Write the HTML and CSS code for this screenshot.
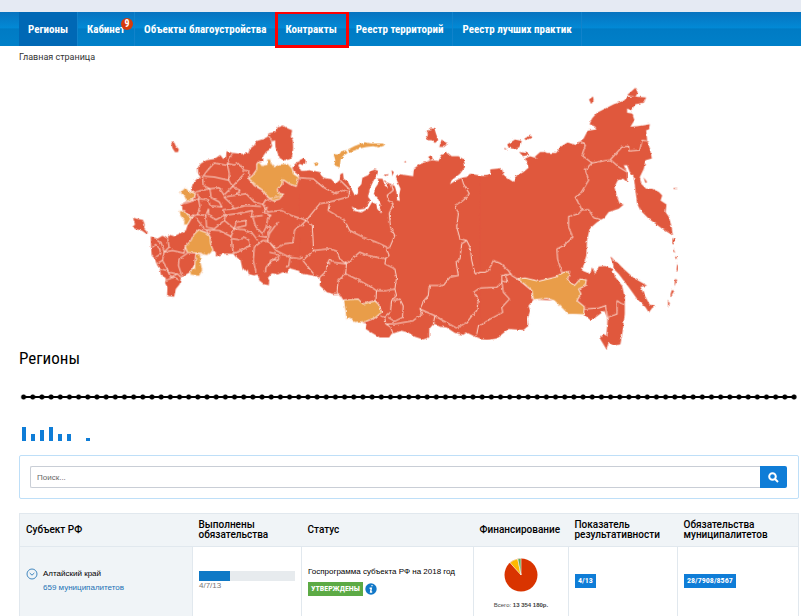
FILE: index.html
```html
<!DOCTYPE html>
<html lang="ru">
<head>
<meta charset="utf-8">
<meta name="viewport" content="width=device-width, initial-scale=1">
<title>Регионы</title>
<link rel="stylesheet" href="styles.css">
</head>
<body>
<nav class="nav">
  <a class="nav-link current" href="#">Регионы</a>
  <a class="nav-link" href="#">Кабинет<span class="count">9</span></a>
  <a class="nav-link" href="#">Объекты благоустройства</a>
  <a class="nav-link marked" href="#">Контракты</a>
  <a class="nav-link" href="#">Реестр территорий</a>
  <a class="nav-link" href="#">Реестр лучших практик</a>
</nav>
<main class="page">
  <a class="crumb" href="#">Главная страница</a>
  <svg class="map" viewBox="27 0 1680 797" role="img" aria-label="Карта регионов">
    <defs>
      <filter id="coast" x="0" y="0" width="1" height="1"><feTurbulence type="fractalNoise" baseFrequency="0.1" numOctaves="1" seed="4"/><feDisplacementMap in="SourceGraphic" scale="9" xChannelSelector="R" yChannelSelector="G"/></filter>
    </defs>
    <g filter="url(#coast)">
      <!-- western part -->
      <g>
        <path class="red" d="M602 276L585 272 567 275 545 272 540 262 536 256 542 250 556 252 558 240 552 234 545 243 532 246 524 254 518 264 524 274 535 283 540 290 510 280 460 270 420 265 412 250 432 243 431 228 440 215 452 207 458 197 455 185 467 180 468 200 475 220 482 235 495 240 510 238 518 230 521 205 520 180 514 170 518 150 505 145 490 136 475 141 468 155 447 160 445 170 430 177 412 182 405 195 390 207 388 218 370 221 342 218 322 213 320 232 312 236 303 224 285 236 262 240 245 250 236 262 237 280 245 292 235 294 222 308 215 328 229 340 224 358 200 364 188 370 190 390 205 400 217 412 205 435 200 450 180 460 165 467 148 462 146 475 130 466 115 475 95 468 96 500 98 525 108 535 112 550 122 565 126 585 140 592 138 608 145 620 144 646 165 648 170 625 182 610 186 590 212 575 230 545 245 520 262 525 282 512 290 515 290 528 312 520 342 520 350 530 363 536 370 568 385 568 388 580 402 585 415 582 420 600 435 612 448 614 450 600 445 592 458 578 475 582 490 575 505 578 508 562 545 573 580 583 602 586Z"/>
        <path class="red" d="M156 188L165 186 170 197 179 207 177 215 168 216 160 204ZM42 412L58 416 72 419 77 432 75 445 87 458 82 460 68 450 50 446 40 440 48 432Z"/>
        <path class="gold line" d="M388 295L400 285 412 268 412 252 418 244 428 256 443 252 443 238 452 236 457 250 465 260 480 251 505 250 518 264 522 280 538 291 530 318 512 312 488 296 488 312 474 326 475 338 492 342 480 356 462 362 445 350 430 330 405 316Z"/>
        <path class="gold line" d="M182 336L200 320 206 330 229 340 224 356 202 363 196 350ZM180 390L196 391 208 405 217 412 205 432 194 434 195 420 183 406ZM238 448L260 456 272 468 274 490 282 510 262 525 245 518 205 516 198 498 215 480 224 462ZM230 518L243 520 245 545 250 570 240 587 214 583 212 573 226 562Z"/>
        <path class="gold" d="M583 250L592 247 597 253 588 256Z"/>
        <path class="border" d="M445 160L458 185 465 182M340 218L328 240 325 256 285 248 265 270 250 290 252 315 272 325M322 250L345 254 360 250 374 270 388 272 388 295M325 256L330 280 328 300 285 290 255 288M328 300L340 318 375 280M272 325L300 322 314 344 340 318 362 330 350 345 314 350M229 335L272 325 276 352 300 365 308 380 272 376 268 358 240 356 235 340M314 350L330 365 345 385 310 388M350 345L380 340 405 365 430 372 440 357 455 362M345 385L380 375 425 378M430 372L445 395 485 390 515 405 555 418 600 370M310 388L315 405 290 418 268 405 268 385M238 356L242 378 235 402 217 410M235 402L260 405 268 385M188 372L212 365 238 356M217 412L225 402M260 405L262 440 285 445 315 420 320 400M315 405L350 400 380 395 400 390 395 410 430 405M315 420L345 445 350 425 380 420 380 435 350 442M400 410L410 440 430 460 440 440 455 440 440 470 415 465M230 412L255 445 265 450M262 448L275 475M265 448L300 450 335 468 345 445 375 448 400 460 415 480M338 475L360 478 375 470 390 480 392 495 365 510 343 518M335 468L340 505 343 520M440 440L445 415 455 405 430 395 445 380M475 425L450 460 445 480 470 505 495 490 520 487 525 450 555 420M430 480L405 500 402 540 410 575M430 480L445 480 470 510 490 520 510 530 545 535 582 510 602 508M450 515L470 520 480 530 475 540 455 535 452 545 440 560 438 575M482 520L440 560M512 528L508 555 500 560M550 530L560 555 580 583M555 418L580 435 583 505M388 295L430 330 450 355 492 345M540 290L580 297 602 310M146 475L150 500 135 515 128 490 115 480M198 498L195 518 160 510 135 515 130 540 150 575 175 580 186 590M205 518L180 535 178 555 188 585M100 500L110 492 122 505 125 520 110 530M112 550L130 540M122 565L145 570 155 590 175 580M138 600L165 590 180 598M245 518L230 520"/>
      </g>
      <!-- central part -->
      <g transform="translate(540)">
        <path class="red" d="M0 274L30 270 60 280 72 292 95 297 108 310 120 300 122 282 130 278 132 295 145 305 155 325 165 345 175 340 175 322 185 312 188 292 205 285 215 272 225 268 235 272 232 285 222 300 210 325 205 350 212 358 205 372 195 385 175 388 155 378 165 392 185 396 205 385 217 365 230 372 232 385 245 400 240 385 242 370 232 350 222 345 225 325 235 310 235 295 248 295 255 315 265 325 258 305 275 312 285 318 290 335 292 360 300 362 298 345 302 325 295 310 288 290 300 282 320 285 340 288 342 265 360 252 385 242 400 240 415 243 425 225 440 215 455 228 475 228 492 238 495 260 480 280 455 300 450 312 465 302 485 292 500 290 510 280 535 285 560 290 575 280 570 268 602 264 602 765 590 773 560 776 530 770 500 755 490 762 465 757 440 740 420 738 402 728 388 745 388 770 370 776 345 768 325 755 305 750 275 760 268 770 240 770 215 755 198 745 200 728 165 720 145 712 132 660 120 640 100 640 82 635 60 615 62 592 42 585 20 582 0 578Z"/>
        <path class="red" d="M380 150L395 150 390 142 403 143 407 157 415 180 405 188 395 180 384 180 378 168 385 162ZM418 200L425 178 433 185 445 190 432 200ZM0 240L12 234 18 243 10 255 0 250ZM312 246L318 242 319 247ZM385 230L395 223 398 236 390 240ZM428 218L440 212 440 220ZM250 283L268 282 260 288ZM275 270L282 275 278 288ZM250 300L258 302 262 310Z"/>
        <path class="gold" d="M145 208L165 197 195 186 215 190 250 190 254 196 238 202 220 198 200 200 180 205 148 217ZM102 222L118 223 125 214 138 210 144 218 130 227 123 238 120 262 104 255 107 240ZM43 252L52 247 57 253 48 257Z"/>
        <path class="gold line" d="M132 658L175 655 190 670 225 660 240 675 245 695 225 712 198 722 165 725 150 712 140 716Z"/>
        <path class="border" d="M0 292L40 295 70 320 108 340 130 330 150 335 145 350 90 365 60 370 20 420 0 412M20 420L0 440M20 420L38 435 42 510 20 530 10 540 42 580M42 510L90 505 112 512 120 535 140 550 100 545 90 535 82 550 92 545M10 530L0 535M85 545L80 572 60 590M90 365L85 390 110 405 135 420 150 450 190 470 230 485 262 500M150 328L122 300M140 550L180 515 205 525 230 530 258 535 255 550 285 565 290 590 285 625 260 630 230 630 215 620 170 595 138 580 140 550M138 580L115 600 112 635 130 658M230 630L228 665M285 625L290 645 275 660 272 695 255 710 242 705M280 660L300 655 310 675 308 710 285 722 265 710M255 712L258 730 272 738 280 760M275 312L280 330 262 345 265 360 280 370 268 400 272 440 285 465 270 500 260 505 268 525 255 535M485 292L490 310 508 340 490 360 465 375 475 400 470 440 480 475 500 480 485 490 480 535 468 545 475 585 450 590 430 615 388 615 385 645 372 660 360 685 405 705 430 720 470 742 500 725 520 700 530 690 535 655 520 635 535 625 580 618 602 600M360 685L368 698 340 720 310 725 285 730 260 730M405 705L400 728M500 480L510 500 515 540 525 580 545 575 560 580 575 545 602 542M602 705L570 725 560 735 535 735 530 760"/>
      </g>
      <!-- eastern part -->
      <g transform="translate(1080)">
        <path class="red" d="M0 290L30 285 32 268 50 270 65 265 72 285 85 295 100 305 105 290 130 275 145 262 135 235 150 228 170 235 190 215 200 218 228 218 240 200 262 187 290 195 300 182 310 175 322 152 348 148 345 140 328 132 335 115 350 98 375 85 400 72 430 62 442 50 470 50 497 52 490 68 465 72 452 90 440 85 440 98 455 100 462 120 450 140 470 138 508 132 505 148 497 150 500 180 508 205 514 235 495 240 490 265 478 290 482 310 497 325 515 325 535 335 545 345 540 360 558 372 555 395 565 410 572 435 577 465 545 445 505 415 480 390 470 370 465 330 460 290 448 275 440 255 430 255 440 275 440 305 428 295 412 300 402 320 410 350 418 370 430 372 415 385 385 395 372 412 350 425 328 445 320 480 318 525 305 570 330 580 335 560 345 580 355 558 375 556 395 565 405 590 425 615 433 650 433 700 427 750 420 790 400 795 385 785 378 805 360 775 370 760 378 765 382 715 372 690 345 710 330 718 312 702 250 660 160 657 145 675 150 690 142 715 145 735 130 748 85 745 60 765 30 775 0 776Z"/>
        <path class="red" d="M390 528L396 532 398 540 410 545 430 565 460 592 500 615 480 618 490 640 508 672 525 675 515 682 505 695 495 680 470 655 445 620 415 580 400 565 398 550ZM440 45L455 32 465 23 472 38 465 50 450 48ZM326 58L338 49 340 60 333 72ZM82 192L105 178 125 182 118 200 105 206 85 202ZM132 175L152 166 156 171 138 180ZM117 215L142 218 145 224 128 228ZM163 230L180 215 198 216 180 236ZM73 202L80 207 74 208Z"/>
        <path class="red" d="M576 472L582 478 580 492 575 490ZM580 502L583 518 578 512ZM583 527L590 530 586 537ZM590 550L594 556 592 574 588 568ZM583 595L590 597 582 617ZM574 628L581 630 570 650 570 640ZM562 660L568 668 563 679ZM579 323L590 323 590 326 579 326ZM489 291L500 305 495 308Z"/>
        <path class="gold line" d="M112 595L135 592 175 602 225 590 250 575 268 573 262 598 282 615 300 595 318 598 315 615 295 625 302 640 290 660 312 678 310 702 262 700 245 682 222 660 200 653 160 657 155 630 135 612Z"/>
        <path class="border" d="M300 182L315 195 305 225 335 248 390 238 425 200 445 198 445 212 478 210 485 180 500 182M335 248L315 268 325 300 300 340 285 350 305 388 295 400 265 408 265 440 278 470 250 495 230 505 232 535 245 575M305 388L325 388 340 412 362 418M390 238L415 260 440 275M0 575L15 575 25 570 40 540 60 548 85 570 95 585 112 595M95 580L65 585 65 600 82 605 75 580M65 605L50 620 0 622M65 600L70 635 88 655 65 680 68 695 30 715 0 735M112 595L155 630 155 655M312 685L355 682 375 675 382 710 410 700 410 660 422 668 435 672M380 710L380 735"/>
      </g>
    </g>
  </svg>
  <h1 class="title">Регионы</h1>
  <div class="beads"></div>
  <svg class="bars" width="72" height="14" viewBox="0 0 72 14" aria-hidden="true"><path d="M3 0h4v14H3zM12 7h4v7h-4zM21 3h4v11h-4zM30 0h4v14h-4zM39 7h4v7h-4zM48 7h4v7h-4zM67 11h4v3h-4z"/></svg>
  <form class="search">
    <input class="query" type="text" placeholder="Поиск..." aria-label="Поиск">
    <button class="go" type="button" aria-label="Найти"><svg width="11" height="11" viewBox="0 0 11 11"><circle cx="4.5" cy="4.5" r="3.3"/><path d="M7 7l3 3"/></svg></button>
  </form>
  <table class="regions">
    <colgroup><col class="c1"><col class="c2"><col class="c3"><col class="c4"><col class="c5"><col class="c6"></colgroup>
    <thead><tr><th>Субъект РФ</th><th>Выполнены обязательства</th><th>Статус</th><th>Финансирование</th><th>Показатель результативности</th><th>Обязательства муниципалитетов</th></tr></thead>
    <tbody><tr>
      <td class="subject"><div class="subject-row">
        <svg width="12" height="12" viewBox="0 0 12 12" aria-hidden="true"><circle cx="6" cy="6" r="5"/><path d="M3.7 5L6 7.2 8.3 5"/></svg>
        <div class="names"><span>Алтайский край</span><a href="#">659 муниципалитетов</a></div>
      </div></td>
      <td><div class="track"><div class="fill"></div></div><div class="ratio">4/7/13</div></td>
      <td><div class="program">Госпрограмма субъекта РФ на 2018 год</div><div class="status"><span class="tag green">УТВЕРЖДЕНЫ</span><svg width="12" height="12" viewBox="0 0 12 12" aria-hidden="true"><circle cx="6" cy="6" r="5.7" fill="#1278c8"/><path d="M6.4 2.6h1.2M4.6 5.2h1.7L5.6 9h1.6" fill="none" stroke="#fff" stroke-width="1.4"/></svg></div></td>
      <td class="finance"><svg width="34" height="34" viewBox="0 0 34 34" aria-hidden="true"><circle cx="17" cy="17" r="16.5" fill="#d93400"/><path d="M17 17L6 4.7A16.5 16.5 0 0 1 13.8.8Z" fill="#ffb800" stroke="#fff" stroke-width=".6"/><path d="M17 17L13.8.8A16.5 16.5 0 0 1 17 .5Z" fill="#5eaa54" stroke="#fff" stroke-width=".6"/></svg><div class="total">Всего: <b>13 354 180р.</b></div></td>
      <td><span class="tag">4/13</span></td>
      <td><span class="tag">28/7908/8567</span></td>
    </tr></tbody>
  </table>
</main>
</body>
</html>
```

FILE: styles.css
```css
* { box-sizing: border-box; }
body { margin: 0; border-top: 12px solid #e5eaf3; background: #fff; color: #000; font-family: "Liberation Sans", Arial, sans-serif; font-size: 8px; }
a { text-decoration: none; }
.nav { display: flex; height: 34px; padding-left: 19px; background: linear-gradient(#0873bf, #0289d5 46%, #007bc4 50%, #0080c9); }
.nav-link { position: relative; display: flex; align-items: center; padding: 0 9px; border-right: 1px solid #1183cb; color: #fff; font: bold 11px "Roboto Condensed", "Liberation Sans Narrow", Roboto, sans-serif; white-space: nowrap; }
.current { background: #0068b5; }
.marked::after { content: ""; position: absolute; z-index: 1; inset: -1px -3px -2px -1px; border: 3px solid #f00; }
.count { position: absolute; top: 6px; right: 1px; width: 12px; height: 12px; border-radius: 50%; background: #d63a0a; font-size: 10px; line-height: 12px; text-align: center; }
.page { padding: 4px 2px 0 19px; }
.crumb { display: block; height: 14px; color: #333; font: 9px/14px Roboto, sans-serif; }
.map { display: block; width: 72%; height: auto; margin: 16px auto 0; overflow: visible; }
.red { fill: #e0583d; }
.gold { fill: #e99d49; }
.line { stroke: #fff0e8; stroke-width: 3; }
.border { fill: none; stroke: #fbd9cf; stroke-width: 3; stroke-linejoin: round; }
.title { margin: 0; font: 17px/24px "Roboto Condensed", "Liberation Sans Narrow", Roboto, sans-serif; }
.beads { height: 6px; margin-top: 24px; background: radial-gradient(circle, #000 2px, transparent 3px) 0 0 / calc(100% / 85) 6px, linear-gradient(#000, #000) center / calc(100% - 8px) 2px no-repeat; }
.bars { display: block; margin-top: 27px; fill: #0f7dd7; }
.search { display: flex; margin: 14px 0; padding: 10px 11px 10px 10px; border: 1px solid #bedff8; border-radius: 2px; }
.query { flex: 1; min-width: 0; height: 22px; padding: 0 6px; border: 1px solid #c9ced6; border-right: 0; border-radius: 2px 0 0 2px; font: 8px "Liberation Sans", sans-serif; }
.query::placeholder { color: #666; opacity: 1; }
.go { display: flex; align-items: center; justify-content: center; width: 27px; height: 22px; padding: 0; border: 0; border-radius: 0 2px 2px 0; background: #0f7dd7; }
.go svg { fill: none; stroke: #fff; stroke-width: 2; }
.regions { width: 100%; table-layout: fixed; border-collapse: collapse; }
.c1 { width: 173px; } .c2 { width: 109px; } .c3 { width: 172px; } .c4 { width: 95px; } .c5 { width: 109px; }
th, td { padding: 0 6px; border: 1px solid #e1e8ee; border-bottom: 0; text-align: left; vertical-align: middle; }
th { height: 33px; border-left: 0; border-right: 0; background: #f0f4f7; font: 500 10px/10px Roboto, sans-serif; }
th:first-child { border-left: 1px solid #e1e8ee; }
th:last-child { border-right: 1px solid #e1e8ee; }
td { height: 69px; padding-bottom: 2px; }
.subject { background: #f0f4f7; }
.subject-row { display: flex; gap: 5px; }
.subject-row svg { margin-top: 1px; fill: none; stroke: #4388c0; }
.names { display: grid; line-height: 14px; }
.names a { color: #1b71b5; }
.track { height: 10px; background: #e7ebee; }
.fill { width: 32%; height: 10px; background: #0f79c6; }
.ratio { color: #777; line-height: 10px; }
.program { line-height: 12px; white-space: nowrap; }
.status { display: flex; align-items: center; gap: 2px; margin-top: 4px; }
.tag { display: inline-block; padding: 0 3px; background: #0f7dd7; color: #fff; font: bold 8px/14px "Roboto Condensed", "Liberation Sans Narrow", Roboto, sans-serif; }
.green { background: #5caa45; }
.finance { padding-top: 6px; text-align: center; }
.total { margin-top: 7px; color: #444; font-size: 6px; line-height: 8px; }
```
